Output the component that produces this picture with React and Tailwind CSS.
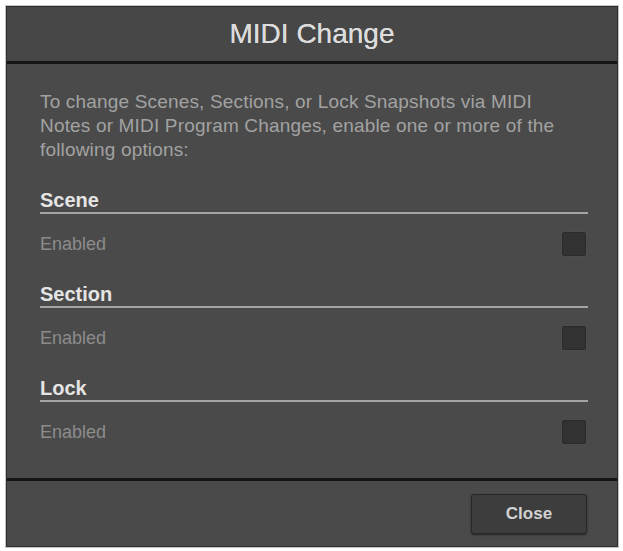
import React from 'react';

const options = ['Scene', 'Section', 'Lock'];

const OptionGroup = ({ label, first }) => (
    <div className={first ? 'mt-[26px]' : 'mt-[26px]'}>
        <div className="border-b-2 border-[#a4a4a4] text-[20px] leading-[24px] font-bold text-[#e4e4e4]">{label}</div>
        <div className="mt-[18px] h-[24px] pr-[2px] flex items-center justify-between">
            <span className="text-[18px] text-[#8c8c8c]">Enabled</span>
            <div className="w-[24px] h-[24px] bg-[#323232] border border-[#2a2a2a] rounded-[2px] shadow-[0_0_2px_rgba(255,255,255,0.08)]" />
        </div>
    </div>
);

export default function App() {
    return (
        <div className="w-[623px] h-[551px] bg-white pt-[6px] pl-[6px] font-['Liberation_Sans',Arial,sans-serif]">
            <div className="w-[612px] h-[541px] flex flex-col border border-[#2e2e2e] bg-[#4a4a4a] shadow-[0_0_0_1px_#c4c4c4]">
                {/* header */}
                <div className="h-[54px] shrink-0 flex items-center justify-center bg-[#474747] text-[28px] text-[#dcdcdc] [text-shadow:0_0_0.4px_#dcdcdc]">
                    MIDI Change
                </div>
                <div className="h-[3px] shrink-0 bg-[#141414]" />

                {/* body */}
                <div className="h-[414px] shrink-0 pl-[33px] pr-[29px] pt-[26px]">
                    <p className="text-[19px] leading-[24px] tracking-[0.17px] text-[#a2a2a2]">
                        To change Scenes, Sections, or Lock Snapshots via MIDI<br />
                        Notes or MIDI Program Changes, enable one or more of the<br />
                        following options:
                    </p>
                    {options.map((o, i) => (
                        <OptionGroup key={o} label={o} first={i === 0} />
                    ))}
                </div>

                <div className="h-[3px] shrink-0 bg-[#141414]" />
                {/* footer */}
                <div className="flex-1 flex justify-end items-start pt-[13px] pr-[30px]">
                    <button className="w-[116px] h-[40px] rounded-[3px] bg-[#3d3d3d] border border-[#272727] shadow-[0_1px_2px_rgba(0,0,0,0.5)] text-[17px] font-bold text-[#d2d2d2]">
                        Close
                    </button>
                </div>
            </div>
        </div>
    );
}
